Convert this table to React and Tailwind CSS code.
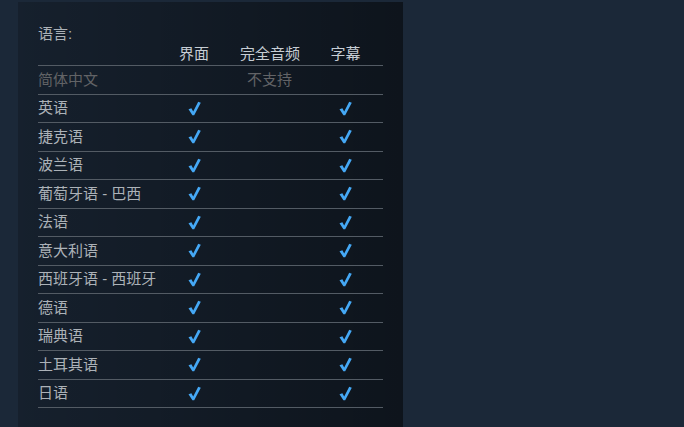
import React from "react";

const langs = [
  "英语",
  "捷克语",
  "波兰语",
  "葡萄牙语 - 巴西",
  "法语",
  "意大利语",
  "西班牙语 - 西班牙",
  "德语",
  "瑞典语",
  "土耳其语",
  "日语",
];

const grid = "grid grid-cols-[127px_58px_94px_57px] w-[345px]";

function Check() {
  return (
    <svg width="13" height="15" viewBox="0 0 13 15" className="inline-block align-middle">
      <path d="M0.5 8.2 L3.4 7.2 L5.2 10.6 L10.2 0.8 L12.8 1.8 L6.2 14.2 L4.4 14.2 Z" fill="#45a8f5" />
    </svg>
  );
}

export default function App() {
  return (
    <div className="w-[684px] h-[427px] bg-[#1b2838] pt-[2px] pl-[18px] font-['Liberation_Sans','Noto_Sans_CJK_SC',sans-serif] text-[15px]">
      <div className="w-[385px] h-[425px] bg-[linear-gradient(to_right,rgba(0,0,0,0.2),rgba(0,0,0,0.5))] pt-[22px] px-[20px]">
        <div className="h-[20px] leading-[20px] text-[#acb2b8]">语言:</div>
        <div className={`${grid} h-[22px] leading-[20px] text-[#c6cdd4] border-b border-[#535b64]`}>
          <div></div>
          <div className="text-center">界面</div>
          <div className="text-center">完全音频</div>
          <div className="text-center">字幕</div>
        </div>
        <div className={`${grid} h-[28.5px] items-center border-b border-[#535b64] text-[#626366]`}>
          <div>简体中文</div>
          <div className="col-span-3 text-center">不支持</div>
        </div>
        {langs.map((l) => (
          <div key={l} className={`${grid} h-[28.5px] items-center border-b border-[#535b64] text-[#acb2b8]`}>
            <div className="whitespace-nowrap">{l}</div>
            <div className="flex justify-center"><Check /></div>
            <div></div>
            <div className="flex justify-center"><Check /></div>
          </div>
        ))}
      </div>
    </div>
  );
}
